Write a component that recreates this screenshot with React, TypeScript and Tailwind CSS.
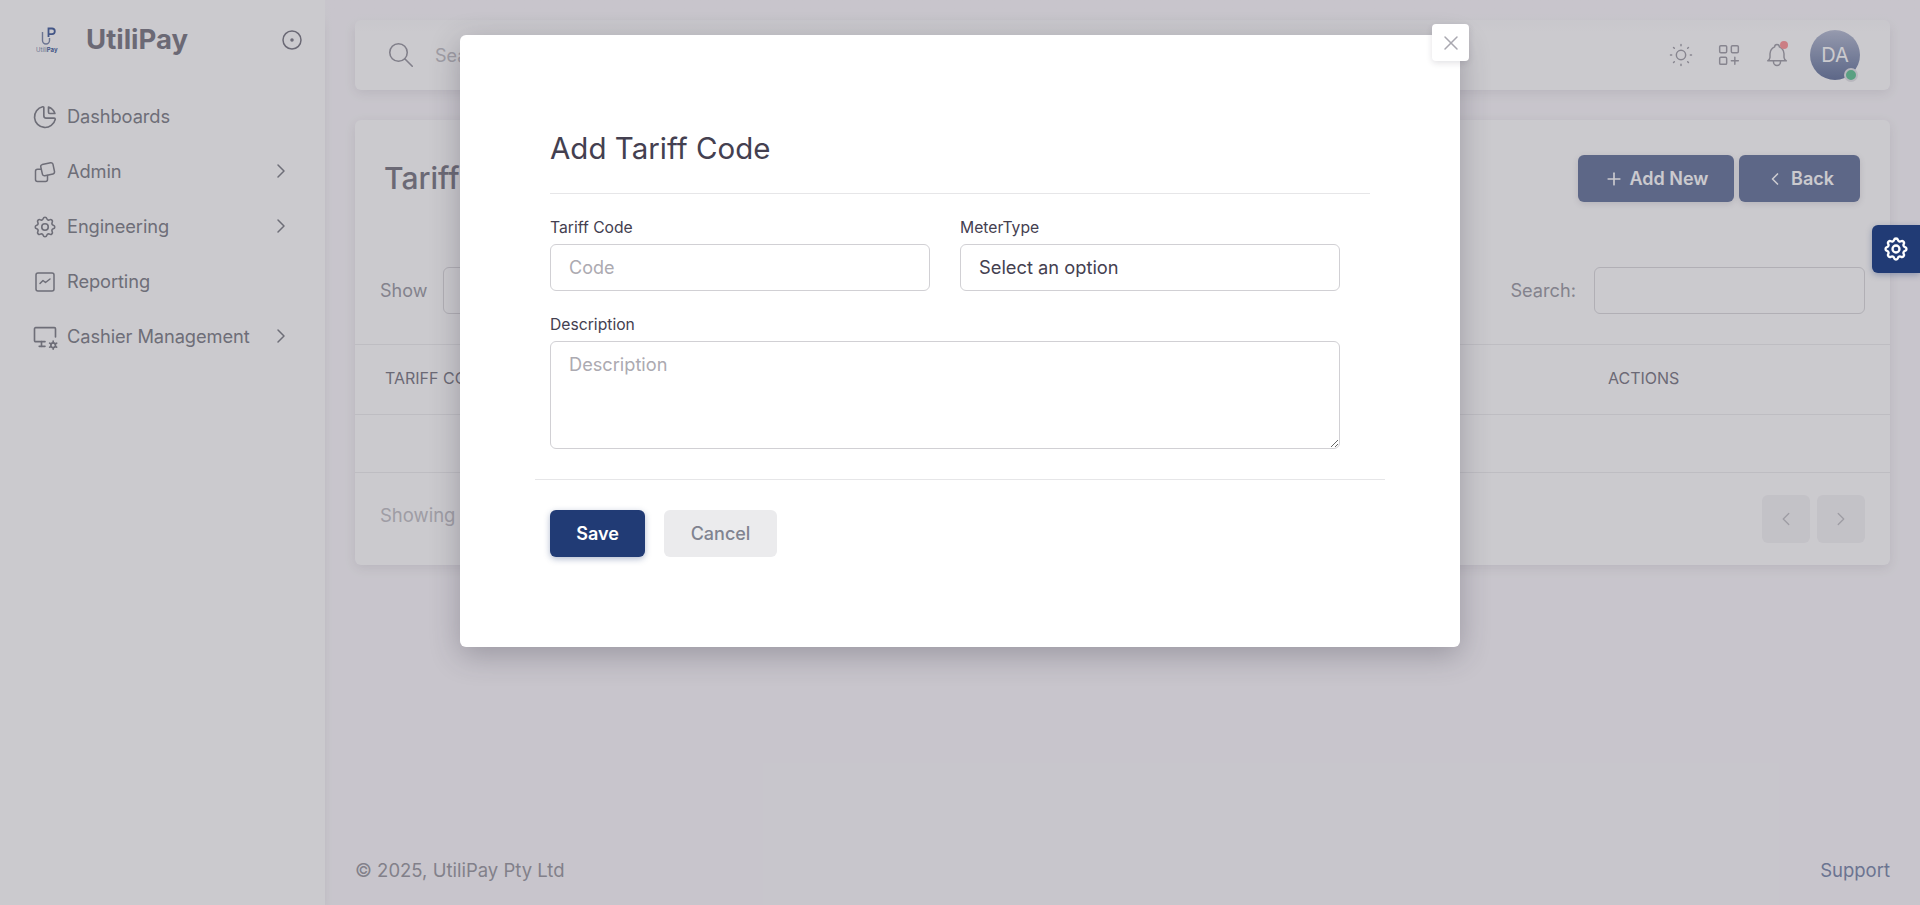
import React from 'react';
import {
  TbChartPie, TbSettings, TbDeviceDesktopCog, TbChevronRight, TbChevronLeft, TbCircleDot, TbSearch, TbSun,
  TbLayoutGridAdd, TbBell, TbPlus, TbX,
} from 'react-icons/tb';

const AdminIcon = () => (
  <svg width="24" height="24" viewBox="0 0 24 24" fill="none" stroke="currentColor" strokeWidth="1.5" strokeLinecap="round" strokeLinejoin="round">
    <path d="M9.2 4.6 17.6 2.8a2 2 0 0 1 2.4 1.5l1.5 7.2a2 2 0 0 1-1.5 2.4l-8.2 1.8a2 2 0 0 1-2.4-1.5L7.8 7a2 2 0 0 1 1.4-2.4z" />
    <path d="M7.8 9.2H4.5A2 2 0 0 0 2.5 11.2v8.3a2 2 0 0 0 2 2h8a2 2 0 0 0 2-2v-4" />
  </svg>
);
const ReportIcon = () => (
  <svg width="24" height="24" viewBox="0 0 24 24" fill="none" stroke="currentColor" strokeWidth="1.5" strokeLinecap="round" strokeLinejoin="round">
    <rect x="3" y="3" width="18" height="18" rx="2" />
    <path d="M7 13.5l3-3 2.5 2 4.5-3.5" />
  </svg>
);
const Logo = () => (
  <svg width="24" height="28" viewBox="0 0 24 28" fill="none">
    <path d="M6.5 6v8.5a3.5 3.5 0 0 0 7 0V12" stroke="#7f8cae" strokeWidth="1.4" />
    <path d="M12.5 11V2.5h3.5a2.7 2.7 0 0 1 0 5.6h-3" stroke="#4a65a0" strokeWidth="1.8" />
    <text x="0" y="26" fontSize="6" fontFamily="Inter, sans-serif" fill="#7f8cae">Utili<tspan fill="#4a65a0" fontWeight="700">Pay</tspan></text>
  </svg>
);

const menu = [
  { label: 'Dashboards', icon: <TbChartPie size={28} strokeWidth={1.4} className="-ml-[2px]" />, arrow: false },
  { label: 'Admin', icon: <AdminIcon />, arrow: true },
  { label: 'Engineering', icon: <TbSettings size={26} strokeWidth={1.5} className="-ml-[1px]" />, arrow: true },
  { label: 'Reporting', icon: <ReportIcon />, arrow: false },
  { label: 'Cashier Management', icon: <TbDeviceDesktopCog size={28} strokeWidth={1.4} className="-ml-[2px]" />, arrow: true },
];

export default function App() {
  return (
    <div className="relative flex h-[905px] w-full overflow-hidden bg-[#fbf9fc] font-['Inter','Noto_Sans',sans-serif] text-[#83848c]">
      <aside className="flex w-[325px] shrink-0 flex-col bg-white shadow-[0_3px_8px_rgba(47,43,61,0.08)]">
        <div className="mt-[20px] flex h-[40px] items-center pl-[36px] pr-[21px]">
          <Logo />
          <span className="ml-[26px] text-[27.5px] font-bold text-[#7f7e89]">UtiliPay</span>
          <TbCircleDot size={24} strokeWidth={1.5} className="ml-auto text-[#7f7e89]" />
        </div>
        <nav className="mt-[29px] flex flex-col pl-[33px] pr-[32px]">
          {menu.map((m) => (
            <div key={m.label} className="flex h-[55px] items-center">
              <span className="flex w-[34px] shrink-0 items-center">{m.icon}</span>
              <span className="whitespace-nowrap text-[18.3px] tracking-[-0.1px]">{m.label}</span>
              {m.arrow && <TbChevronRight size={24} strokeWidth={1.5} className="ml-auto -mt-[2px] text-[#83848c]" />}
            </div>
          ))}
        </nav>
      </aside>

      <main className="relative flex min-w-0 flex-1 flex-col px-[30px]">
        <header className="mt-[20px] flex h-[70px] shrink-0 items-center rounded-md bg-white pl-[31px] pr-[30px] shadow-[0_3px_12px_rgba(47,43,61,0.1)]">
          <TbSearch size={30} strokeWidth={1.25} className="text-[#9c9ba4]" />
          <span className="ml-[19px] text-[18px] text-[#c4c3c8]">Search...</span>
          <div className="ml-auto flex items-center">
            <TbSun size={28} strokeWidth={1.25} className="text-[#a4a3ab]" />
            <TbLayoutGridAdd size={28} strokeWidth={1.25} className="ml-[20px] text-[#a4a3ab]" />
            <div className="relative ml-[20px]">
              <TbBell size={28} strokeWidth={1.25} className="text-[#a4a3ab]" />
              <span className="absolute right-[3px] top-[0px] h-[8px] w-[8px] rounded-full bg-[#ff9a9d]" />
            </div>
            <div className="relative ml-[19px] flex h-[50px] w-[50px] items-center justify-center rounded-full bg-gradient-to-b from-[#b8bfd4] to-[#6c7ba1] text-[20px] text-white">
              DA
              <span className="absolute bottom-[-2px] right-[2px] h-[14px] w-[14px] rounded-full border-2 border-[#e6e6ea] bg-[#68c79a]" />
            </div>
          </div>
        </header>
        <div className="absolute inset-x-0 top-0 h-[32px] bg-gradient-to-b from-[#fbf9fc] via-[#fbf9fc]/80 to-transparent" />

        <section className="mt-[30px] rounded-md bg-white shadow-[0_3px_12px_rgba(47,43,61,0.1)]">
          <div className="flex h-[122px] items-start justify-between pl-[29px] pr-[30px] pt-[35px]">
            <h2 className="mt-[6px] text-[30px] font-medium leading-[34px] text-[#7f7e89]">Tariff Codes</h2>
            <div className="flex gap-[5px]">
              <button className="flex h-[47px] w-[156px] items-center justify-center gap-[6px] rounded-md bg-[#6c7ba1] text-[18px] font-semibold text-white shadow-[0_2px_6px_rgba(47,43,61,0.14)]">
                <TbPlus size={20} />Add New
              </button>
              <button className="flex h-[47px] w-[121px] items-center justify-center gap-[6px] rounded-md bg-[#6c7ba1] text-[18px] font-semibold text-white shadow-[0_2px_6px_rgba(47,43,61,0.14)]">
                <TbChevronLeft size={20} />Back
              </button>
            </div>
          </div>
          <div className="flex h-[102px] items-start justify-between pl-[25px] pr-[25px] pt-[25px]">
            <div className="flex h-[47px] items-center gap-[16px] text-[18px]">
              <span className="text-[#a09fa8]">Show</span>
              <span className="h-[47px] w-[80px] rounded-md border border-[#dcdbde]" />
            </div>
            <div className="flex h-[47px] items-center gap-[18px] text-[18.2px]">
              <span className="text-[#a09fa8]">Search:</span>
              <input className="h-[47px] w-[271px] rounded-md border border-[#dcdbde] bg-transparent" />
            </div>
          </div>
          <div className="flex h-[71px] items-center border-y border-[#eeeeef] pb-[3px] pl-[30px] text-[16px] uppercase text-[#7f7e89]">
            <span className="w-[1223px]">Tariff Code</span>
            <span>Actions</span>
          </div>
          <div className="h-[58px] border-b border-[#eeeeef]" />
          <div className="flex h-[92px] items-center justify-between pl-[25px] pr-[25px]">
            <span className="-mt-[6px] text-[18.5px] text-[#c4c3c8]">Showing 0 to 0 of 0 entries</span>
            <div className="flex gap-[7px] text-[#c4c3c8]">
              <span className="flex h-[48px] w-[48px] items-center justify-center rounded-md bg-[#f5f4f6]"><TbChevronLeft size={22} strokeWidth={1.5} /></span>
              <span className="flex h-[48px] w-[48px] items-center justify-center rounded-md bg-[#f5f4f6]"><TbChevronRight size={22} strokeWidth={1.5} /></span>
            </div>
          </div>
        </section>

        <footer className="mt-auto mb-[20px] flex items-center justify-between text-[18.5px] text-[#9e9da5]">
          <span>© 2025, UtiliPay Pty Ltd</span>
          <span className="text-[#7f8cae]">Support</span>
        </footer>
      </main>

      <div className="absolute inset-0 flex justify-center bg-[#2f2b3d]/25 pt-[35px]">
        <div className="relative h-[612px] w-[1000px] rounded-md bg-white px-[90px] pt-[96px] shadow-[0_8px_30px_rgba(47,43,61,0.3)]">
          <button className="absolute right-[-9px] top-[-11px] flex h-[37px] w-[37px] items-center justify-center rounded-[4px] bg-white text-[#a9a8b0] shadow-[0_2px_6px_rgba(47,43,61,0.14)]">
            <TbX size={24} strokeWidth={1.5} />
          </button>
          <h3 className="text-[29.5px] leading-[34px] text-[#444050]">Add Tariff Code</h3>
          <div className="mt-[28px] border-t border-[#e6e6e8]" />
          <div className="mt-[24px] grid w-[790px] grid-cols-2 gap-x-[30px]">
            <label className="block text-[15.7px] leading-[20px] text-[#444050]">
              Tariff Code
              <input placeholder="Code" className="mt-[6px] block h-[47px] w-full rounded-md border border-[#d1d0d4] px-[18px] text-[18px] outline-none placeholder:text-[#acaab1]" />
            </label>
            <label className="block text-[15.7px] leading-[20px] text-[#444050]">
              MeterType
              <select className="mt-[6px] block h-[47px] w-full appearance-none rounded-md border border-[#d1d0d4] bg-white px-[18px] pb-[2px] text-[18.3px] text-[#444050] outline-none">
                <option>Select an option</option>
              </select>
            </label>
          </div>
          <label className="mt-[24px] block w-[790px] text-[15.7px] leading-[20px] text-[#444050]">
            Description
            <textarea placeholder="Description" className="mt-[6px] block h-[108px] w-full rounded-md border border-[#d1d0d4] px-[18px] py-[12px] text-[18.2px] outline-none placeholder:text-[#acaab1]" />
          </label>
          <div className="-mx-[15px] mt-[30px] border-t border-[#e6e6e8]" />
          <div className="mt-[30px] flex gap-[19px]">
            <button className="h-[47px] w-[95px] rounded-md bg-[#213b75] text-[18px] font-semibold text-white shadow-[0_2px_6px_rgba(33,59,117,0.35)]">Save</button>
            <button className="h-[47px] w-[113px] rounded-md bg-[#ebebed] text-[18px] font-medium text-[#808390]">Cancel</button>
          </div>
        </div>
      </div>

      <button className="absolute right-0 top-[225px] flex h-[48px] w-[48px] items-center justify-center rounded-l-md bg-[#213b75] text-white shadow-[0_2px_6px_rgba(33,59,117,0.35)]">
        <TbSettings size={28} strokeWidth={2} />
      </button>
    </div>
  );
}
